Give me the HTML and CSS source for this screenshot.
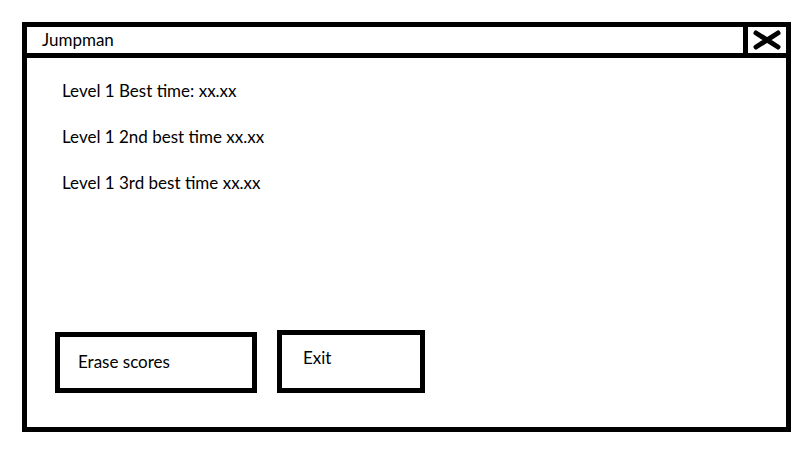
FILE: index.html
```html
<!DOCTYPE html>
<html lang="en">

<head>
    <meta charset="UTF-8">
    <meta name="viewport" content="width=device-width, initial-scale=1.0">
    <title>Jumpman - Best times</title>
    <link rel="stylesheet" href="styles.css">
</head>

<body>
    <div class="window">
        <div class="title-bar">
            <span class="title">Jumpman</span>
            <button class="close-button" aria-label="Close">
                <svg width="28" height="20" viewBox="0 0 28 20">
                    <path d="M3 3 L25 17 M3 17 L25 3" stroke="#000" stroke-width="5" stroke-linecap="round" fill="none"/>
                </svg>
            </button>
        </div>
        <div class="content">
            <ul class="scores">
                <li>Level 1 Best time: xx.xx</li>
                <li>Level 1 2nd best time xx.xx</li>
                <li>Level 1 3rd best time xx.xx</li>
            </ul>
            <div class="actions">
                <button class="action-button erase-button">Erase scores</button>
                <button class="action-button exit-button">Exit</button>
            </div>
        </div>
    </div>
</body>
</html>
```

FILE: styles.css
```css
body {
    margin: 0;
    padding: 22px 0 0 22px;
    background-color: #fff;
    color: #000;
    font-family: Lato, "Liberation Sans", sans-serif;
    font-size: 17px;
}

.window {
    width: 769px;
    height: 410px;
    border: 5px solid #000;
    box-sizing: border-box;
    display: flex;
    flex-direction: column;
}

.title-bar {
    display: flex;
    height: 31px;
    border-bottom: 5px solid #000;
    box-sizing: border-box;
}

.title {
    flex: 1;
    padding-left: 15px;
    line-height: 26px;
}

.close-button {
    width: 43px;
    margin: 0;
    padding: 0;
    border: none;
    border-left: 5px solid #000;
    background: #fff;
    display: flex;
    align-items: center;
    justify-content: center;
    cursor: pointer;
}

.content {
    flex: 1;
    display: flex;
    flex-direction: column;
}

.scores {
    list-style: none;
    margin: 0;
    padding: 22px 0 0 35px;
}

.scores li {
    line-height: 22px;
    margin-bottom: 24px;
}

.actions {
    display: flex;
    align-items: flex-start;
    gap: 20px;
    margin-top: 112px;
    padding-left: 28px;
}

.action-button {
    font-family: inherit;
    font-size: 17px;
    color: #000;
    background: #fff;
    border: 5px solid #000;
    box-sizing: border-box;
    text-align: left;
    cursor: pointer;
}

.erase-button {
    width: 202px;
    height: 61px;
    margin-top: 2px;
    padding: 0 0 3px 18px;
}

.exit-button {
    width: 148px;
    height: 63px;
    padding: 0 0 8px 21px;
}
```
